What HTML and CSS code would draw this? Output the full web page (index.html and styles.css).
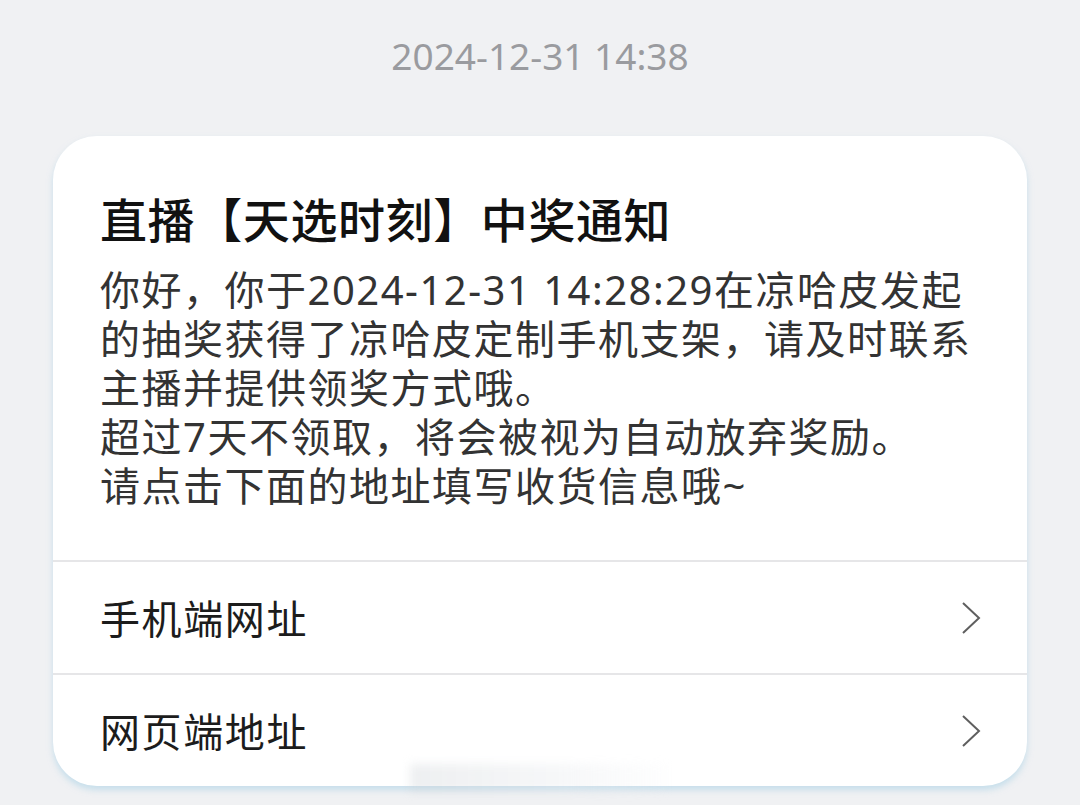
FILE: index.html
```html
<!DOCTYPE html>
<html lang="zh-CN">
<head>
	<title>中奖通知</title>
	<meta charset="UTF-8">
	<link rel="stylesheet" href="styles.css">
</head>
<body>
	<header class="stamp">2024-12-31 14:38</header>

	<section class="card">
		<div class="content">
			<h1 class="title">直播【天选时刻】中奖通知</h1>
			<p class="text">
				你好，你于2024-12-31 14:28:29在凉哈皮发起<br>
				的抽奖获得了凉哈皮定制手机支架，请及时联系<br>
				主播并提供领奖方式哦。<br>
				超过7天不领取，将会被视为自动放弃奖励。<br>
				请点击下面的地址填写收货信息哦~
			</p>
		</div>
		<a class="row">
			<span>手机端网址</span>
			<svg class="chev" width="22" height="34" viewBox="0 0 22 34"><path d="M3 2 L19 17 L3 32" fill="none" stroke="#5f5f5f" stroke-width="2"/></svg>
		</a>
		<a class="row">
			<span>网页端地址</span>
			<svg class="chev" width="22" height="34" viewBox="0 0 22 34"><path d="M3 2 L19 17 L3 32" fill="none" stroke="#5f5f5f" stroke-width="2"/></svg>
		</a>
	</section>
	<div class="mark"></div>
</body>
</html>
```

FILE: styles.css
```css
body {
	margin: 0;
	padding: 0;
	background: #f0f1f3;
	font-family: "Noto Sans", "Noto Sans CJK SC", sans-serif;
	width: 1080px;
	height: 805px;
	overflow: hidden;
	position: relative;
}

.stamp {
	height: 110px;
	display: flex;
	align-items: center;
	justify-content: center;
	font-size: 37px;
	color: #9a9b9f;
}

.card {
	margin: 26px 53px 0;
	background: #fff;
	border-radius: 44px;
	box-shadow: 0 4px 6px rgba(170, 210, 230, 0.6);
	overflow: hidden;
}

.content {
	padding: 54px 48px 50px 47px;
	border-bottom: 2px solid #e6e6e8;
}

.title {
	margin: 0;
	font-size: 47px;
	line-height: 60px;
	font-weight: 500;
	letter-spacing: 0.6px;
	color: #111;
}

.text {
	margin: 15px 0 0;
	font-size: 40px;
	line-height: 49px;
	letter-spacing: 1.5px;
	color: #333;
}

.row {
	height: 111px;
	display: flex;
	align-items: center;
	justify-content: space-between;
	padding: 0 45px 0 47px;
	font-size: 40px;
	color: #1c1c1c;
	letter-spacing: 1.6px;
}
.row + .row {
	border-top: 2px solid #e6e6e8;
}
.row span {
	padding-bottom: 2px;
}

/* faint watermark over the card edge */
.mark {
	position: absolute;
	left: 410px;
	top: 764px;
	width: 260px;
	height: 28px;
	background: linear-gradient(90deg, rgba(205,210,215,0.35), rgba(228,231,235,0.3) 60%, rgba(240,242,244,0.05));
	filter: blur(5px);
}
```
